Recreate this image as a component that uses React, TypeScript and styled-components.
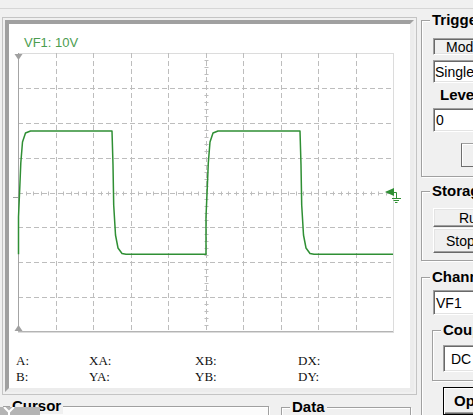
import React from "react";
import styled, { createGlobalStyle } from "styled-components";

const Global = createGlobalStyle`
  html, body { margin: 0; padding: 0; background: #f0f0f0; }
  body { font-family: "Liberation Sans", Arial, sans-serif; }
`;

const Window = styled.div`
  position: relative;
  width: 473px;
  height: 415px;
  overflow: hidden;
  background: #f0f0f0;
  color: #000;
`;

const TopRule = styled.div`
  height: 8px;
  border-bottom: 1px solid #d6d6d6;
`;

const Body = styled.div`
  display: flex;
  align-items: flex-start;
  margin-top: 8px;
`;

const LeftColumn = styled.div`
  flex: none;
  width: 417px;
  display: flex;
  flex-direction: column;
`;

const ScreenOuter = styled.div`
  margin-left: 2px;
  width: 415px;
  height: 378px;
  box-sizing: border-box;
  border: 1px solid #c4c4c4;
  padding: 2px;
`;

const ScreenInner = styled.div`
  height: 100%;
  box-sizing: border-box;
  border: 4px solid;
  border-color: #a0a0a0 #ececec #ececec #a0a0a0;
  background: #fff;
  display: flex;
  flex-direction: column;
`;

const ChannelLabel = styled.div`
  margin: 12px 0 0 15px;
  font: 13px/14px "Liberation Sans", Arial, sans-serif;
  color: #4c9d50;
`;

const Plot = styled.svg`
  display: block;
  flex: none;
`;

const Readouts = styled.div`
  margin-top: 13px;
  padding-left: 7px;
  display: grid;
  grid-template-columns: 73px 106px 103px auto;
  font: 13px/16px "Liberation Serif", "Times New Roman", serif;
  color: #111;
`;

const BottomRow = styled.div`
  display: flex;
  align-items: flex-start;
`;

const Group = styled.div<{ $mt?: number; $ml?: number; $pb?: number; $w?: number; $h?: number; $fill?: string }>`
  flex: none;
  box-sizing: border-box;
  margin-top: ${(p) => p.$mt ?? 0}px;
  margin-left: ${(p) => p.$ml ?? 0}px;
  ${(p) => (p.$w ? `width: ${p.$w}px;` : "align-self: stretch;")}
  ${(p) => (p.$h ? `height: ${p.$h}px;` : "")}
  padding-bottom: ${(p) => p.$pb ?? 0}px;
  border: 1px solid #a0a0a0;
  box-shadow: inset 1px 1px 0 #fff, 1px 1px 0 #fff;
  background: ${(p) => p.$fill ?? "transparent"};
  display: flex;
  flex-direction: column;
  align-items: flex-start;
`;

const GroupTitle = styled.div<{ $indent: number }>`
  margin: -9px 0 0 ${(p) => p.$indent}px;
  padding: 0 2px;
  background: #f0f0f0;
  font: bold 15px/16px "Liberation Sans", Arial, sans-serif;
  white-space: nowrap;
`;

const SideColumn = styled.div`
  flex: none;
  width: 112px;
  margin-left: 4px;
  display: flex;
  flex-direction: column;
`;

const FieldCaption = styled.div<{ $mt: number; $ml: number }>`
  margin: ${(p) => p.$mt}px 0 0 ${(p) => p.$ml}px;
  font: bold 15px/16px "Liberation Sans", Arial, sans-serif;
  white-space: nowrap;
`;

const SunkenField = styled.div<{ $mt: number; $ml: number; $h: number; $pl: number; $white?: boolean }>`
  flex: none;
  box-sizing: border-box;
  margin: ${(p) => p.$mt}px 0 0 ${(p) => p.$ml}px;
  width: 92px;
  height: ${(p) => p.$h}px;
  padding-left: ${(p) => p.$pl}px;
  border: 1px solid;
  border-color: #a0a0a0 #fff #fff #a0a0a0;
  box-shadow: inset 1px 1px 0 #696969, inset -1px -1px 0 #e3e3e3;
  background: ${(p) => (p.$white ? "#fff" : "#f0f0f0")};
  display: flex;
  align-items: center;
  font: 14px/16px "Liberation Sans", Arial, sans-serif;
  white-space: nowrap;
`;

const PushButton = styled.div<{ $mt: number; $ml: number; $h: number; $pl: number; $w?: number }>`
  flex: none;
  box-sizing: border-box;
  margin: ${(p) => p.$mt}px 0 0 ${(p) => p.$ml}px;
  width: ${(p) => p.$w ?? 92}px;
  height: ${(p) => p.$h}px;
  padding-left: ${(p) => p.$pl}px;
  border: 1px solid;
  border-color: #fff #696969 #696969 #fff;
  box-shadow: inset -1px -1px 0 #a0a0a0, inset 1px 1px 0 #e3e3e3;
  background: #f0f0f0;
  display: flex;
  align-items: center;
  font: 14px/16px "Liberation Sans", Arial, sans-serif;
  white-space: nowrap;
`;

const SquareButton = styled.div<{ $mt: number; $ml: number }>`
  flex: none;
  box-sizing: border-box;
  margin: ${(p) => p.$mt}px 0 0 ${(p) => p.$ml}px;
  width: 30px;
  height: 24px;
  border: 1px solid;
  border-color: #a0a0a0 #6e6e6e #6e6e6e #6e6e6e;
  box-shadow: inset 1px 1px 0 #fff;
  background: #f0f0f0;
`;

const DefaultButton = styled.div<{ $mt: number; $ml: number }>`
  flex: none;
  box-sizing: border-box;
  margin: ${(p) => p.$mt}px 0 0 ${(p) => p.$ml}px;
  width: 84px;
  height: 28px;
  padding: 5px 0 0 10px;
  border: 1px solid #000;
  box-shadow: inset 1px 1px 0 #fff, inset -1px -1px 0 #696969, inset -2px -2px 0 #a0a0a0;
  background: #f0f0f0;
  font: bold 15px/16px "Liberation Sans", Arial, sans-serif;
  white-space: nowrap;
`;

const CursorTool = styled.div`
  position: absolute;
  left: 0;
  top: 407px;
  width: 40px;
  height: 8px;
  background: #b4b4b4;
  display: flex;
  align-items: flex-start;
  padding-left: 3px;
  box-sizing: border-box;
`;

/* ---------- plot drawing ---------- */

const OX = 9;
const OY = 50;
const L = 9;
const R = 384;
const T = 3;
const B = 282;
const DX = (R - L) / 10;
const DY = (B - T) / 8;
const GRID = "#bdbdbd";
const GREEN = "#2f8f34";

const RISE: [number, number][] = [
  [0, 254.3],
  [0, 217],
  [1.3, 187],
  [2.3, 163],
  [4, 142],
  [7, 133],
  [12, 131],
];
const FALL: [number, number][] = [
  [0, 131],
  [1, 165],
  [1.7, 205],
  [3.5, 235],
  [6, 248],
  [10, 253.5],
  [14, 254.3],
];

function tracePath(): string {
  const pts: string[] = [];
  const add = (x: number, y: number) => pts.push(`${(x - OX).toFixed(1)},${(y - OY).toFixed(1)}`);
  const edges: [number, "r" | "f"][] = [
    [18.5, "r"],
    [112, "f"],
    [206, "r"],
    [300, "f"],
  ];
  edges.forEach(([x0, k]) => (k === "r" ? RISE : FALL).forEach(([dx, y]) => add(x0 + dx, y)));
  add(393, 254.3);
  return "M" + pts.join(" L");
}

const px = (v: number) => Math.round(v) + 0.5;

function Scope() {
  const vx = Array.from({ length: 9 }, (_, i) => px(L + DX * (i + 1)));
  const hy = Array.from({ length: 7 }, (_, i) => px(T + DY * (i + 1)));
  const cx = vx[4];
  const cy = hy[3];
  const hTicks = Array.from({ length: 49 }, (_, i) => L + (DX / 5) * (i + 1));
  const vTicks = Array.from({ length: 39 }, (_, i) => T + (DY / 5) * (i + 1));
  return (
    <Plot width={399} height={290} viewBox="0 0 399 290">
      <rect x={L + 0.5} y={T + 0.5} width={R - L} height={B - T} fill="none" stroke="#dcdcdc" />
      {vx.map((x) => (
        <line key={"v" + x} x1={x} y1={T} x2={x} y2={B} stroke={GRID} strokeDasharray="5 3" />
      ))}
      {hy.map((y) => (
        <line key={"h" + y} x1={L} y1={y} x2={R} y2={y} stroke={GRID} strokeDasharray="5 3" />
      ))}
      {hTicks.map((x) => (
        <line key={"ht" + x} x1={px(x)} y1={cy - 2} x2={px(x)} y2={cy + 2} stroke={GRID} />
      ))}
      {vTicks.map((y) => (
        <line key={"vt" + y} x1={cx - 2} y1={px(y)} x2={cx + 2} y2={px(y)} stroke={GRID} />
      ))}
      <line x1={L + 0.5} y1={T} x2={L + 0.5} y2={B} stroke="#a4a4a4" />
      <line x1={L} y1={B - 0.5} x2={R} y2={B - 0.5} stroke="#b4b4b4" />
      <polygon points="5.5,4 13.5,4 9.5,10" fill="#a0a0a0" />
      <polygon points="5.5,281 13.5,281 9.5,275" fill="#a0a0a0" />
      <line x1={4} y1={147.5} x2={9} y2={147.5} stroke="#a0a0a0" />
      <path d={tracePath()} fill="none" stroke={GREEN} strokeWidth={1.5} strokeLinejoin="round" />
      <polygon points="376,142 385,138 385,146" fill={GREEN} />
      <path d="M385 142.5 H387.5 V148 M383 148.5 H392 M384.5 150.5 H390 M386 152.5 H388.5" stroke={GREEN} fill="none" />
    </Plot>
  );
}

export default function App() {
  return (
    <>
      <Global />
      <Window>
        <TopRule />
        <Body>
          <LeftColumn>
            <ScreenOuter>
              <ScreenInner>
                <ChannelLabel>VF1: 10V</ChannelLabel>
                <Scope />
                <Readouts>
                  <span>A:</span>
                  <span>XA:</span>
                  <span>XB:</span>
                  <span>DX:</span>
                  <span>B:</span>
                  <span>YA:</span>
                  <span>YB:</span>
                  <span>DY:</span>
                </Readouts>
              </ScreenInner>
            </ScreenOuter>
            <BottomRow>
              <Group $mt={11} $ml={3} $w={266} $h={30} $fill="#fbfbfb">
                <GroupTitle $indent={6}>Cursor</GroupTitle>
              </Group>
              <Group $mt={12} $ml={12} $w={130} $h={30}>
                <GroupTitle $indent={8}>Data</GroupTitle>
              </Group>
            </BottomRow>
          </LeftColumn>
          <SideColumn>
            <Group $mt={3} $pb={9}>
              <GroupTitle $indent={8}>Trigger</GroupTitle>
              <SunkenField $mt={10} $ml={11} $h={17} $pl={12}>
                Mode
              </SunkenField>
              <SunkenField $mt={5} $ml={11} $h={23} $pl={1} $white>
                Single
              </SunkenField>
              <FieldCaption $mt={4} $ml={18}>
                Level
              </FieldCaption>
              <SunkenField $mt={5} $ml={11} $h={24} $pl={2} $white>
                0
              </SunkenField>
              <SquareButton $mt={11} $ml={39} />
            </Group>
            <Group $mt={14} $pb={7}>
              <GroupTitle $indent={8}>Storage</GroupTitle>
              <PushButton $mt={9} $ml={11} $h={19} $pl={25}>
                Run
              </PushButton>
              <PushButton $mt={1} $ml={11} $h={25} $pl={12}>
                Stop
              </PushButton>
            </Group>
            <Group $mt={16} $pb={20}>
              <GroupTitle $indent={8}>Channel</GroupTitle>
              <SunkenField $mt={5} $ml={11} $h={25} $pl={2} $white>
                VF1
              </SunkenField>
              <Group $mt={15} $ml={10} $pb={8}>
                <GroupTitle $indent={8}>Coupling</GroupTitle>
                <SunkenField $mt={7} $ml={10} $h={27} $pl={7} $white>
                  DC
                </SunkenField>
              </Group>
              <DefaultButton $mt={6} $ml={21}>Options</DefaultButton>
            </Group>
          </SideColumn>
        </Body>
        <CursorTool>
          <svg width="12" height="8" viewBox="0 0 12 8">
            <path d="M1 0 L6 5 L11 0 M6 5 V8" stroke="#fff" strokeWidth="2" fill="none" />
          </svg>
        </CursorTool>
      </Window>
    </>
  );
}
